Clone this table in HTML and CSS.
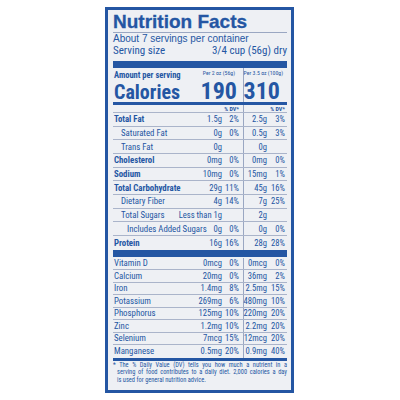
FILE: index.html
```html
<!DOCTYPE html>
<html lang="en">
<head>
    <meta charset="UTF-8">
    <meta name="viewport" content="width=device-width, initial-scale=1.0">
    <title>Nutrition Facts</title>
    <link rel="stylesheet" href="styles.css">
</head>
<body>
    <div class="label">
        <h1 class="title">Nutrition Facts</h1>
        <div class="servings">About 7 servings per container</div>
        <div class="serving-size">
            <span>Serving size</span>
            <span>3/4 cup (56g) dry</span>
        </div>
        <div class="bar bar-thick"></div>

        <div class="row row-amount">
            <span class="name">Amount per serving</span>
            <span class="c1 per">Per 2 oz (56g)</span>
            <span class="c2 per">Per 3.5 oz (100g)</span>
        </div>
        <div class="row row-calories">
            <span class="name">Calories</span>
            <span class="c1 cal">190</span>
            <span class="c2 cal">310</span>
        </div>
        <div class="bar bar-medium"></div>
        <div class="row row-dv">
            <span class="name"></span>
            <span class="amt1"></span>
            <span class="dv1">% DV*</span>
            <span class="amt2"></span>
            <span class="dv2">% DV*</span>
        </div>

        <div class="row nut">
            <span class="name bold">Total Fat</span>
            <span class="amt1">1.5g</span><span class="dv1">2%</span>
            <span class="amt2">2.5g</span><span class="dv2">3%</span>
        </div>
        <div class="row nut">
            <span class="name sub">Saturated Fat</span>
            <span class="amt1">0g</span><span class="dv1">0%</span>
            <span class="amt2">0.5g</span><span class="dv2">3%</span>
        </div>
        <div class="row nut">
            <span class="name sub">Trans Fat</span>
            <span class="amt1">0g</span><span class="dv1"></span>
            <span class="amt2">0g</span><span class="dv2"></span>
        </div>
        <div class="row nut">
            <span class="name bold">Cholesterol</span>
            <span class="amt1">0mg</span><span class="dv1">0%</span>
            <span class="amt2">0mg</span><span class="dv2">0%</span>
        </div>
        <div class="row nut">
            <span class="name bold">Sodium</span>
            <span class="amt1">10mg</span><span class="dv1">0%</span>
            <span class="amt2">15mg</span><span class="dv2">1%</span>
        </div>
        <div class="row nut">
            <span class="name bold">Total Carbohydrate</span>
            <span class="amt1">29g</span><span class="dv1">11%</span>
            <span class="amt2">45g</span><span class="dv2">16%</span>
        </div>
        <div class="row nut">
            <span class="name sub">Dietary Fiber</span>
            <span class="amt1">4g</span><span class="dv1">14%</span>
            <span class="amt2">7g</span><span class="dv2">25%</span>
        </div>
        <div class="row nut">
            <span class="name sub">Total Sugars</span>
            <span class="amt1">Less than 1g</span><span class="dv1"></span>
            <span class="amt2">2g</span><span class="dv2"></span>
        </div>
        <div class="row nut">
            <span class="name sub2">Includes Added Sugars</span>
            <span class="amt1">0g</span><span class="dv1">0%</span>
            <span class="amt2">0g</span><span class="dv2">0%</span>
        </div>
        <div class="row nut last">
            <span class="name bold">Protein</span>
            <span class="amt1">16g</span><span class="dv1">16%</span>
            <span class="amt2">28g</span><span class="dv2">28%</span>
        </div>

        <div class="bar bar-thick"></div>

        <div class="vitamins">
            <div class="row vit">
                <span class="name">Vitamin D</span>
                <span class="amt1">0mcg</span><span class="dv1">0%</span>
                <span class="amt2">0mcg</span><span class="dv2">0%</span>
            </div>
            <div class="row vit">
                <span class="name">Calcium</span>
                <span class="amt1">20mg</span><span class="dv1">0%</span>
                <span class="amt2">36mg</span><span class="dv2">2%</span>
            </div>
            <div class="row vit">
                <span class="name">Iron</span>
                <span class="amt1">1.4mg</span><span class="dv1">8%</span>
                <span class="amt2">2.5mg</span><span class="dv2">15%</span>
            </div>
            <div class="row vit">
                <span class="name">Potassium</span>
                <span class="amt1">269mg</span><span class="dv1">6%</span>
                <span class="amt2">480mg</span><span class="dv2">10%</span>
            </div>
            <div class="row vit">
                <span class="name">Phosphorus</span>
                <span class="amt1">125mg</span><span class="dv1">10%</span>
                <span class="amt2">220mg</span><span class="dv2">20%</span>
            </div>
            <div class="row vit">
                <span class="name">Zinc</span>
                <span class="amt1">1.2mg</span><span class="dv1">10%</span>
                <span class="amt2">2.2mg</span><span class="dv2">20%</span>
            </div>
            <div class="row vit">
                <span class="name">Selenium</span>
                <span class="amt1">7mcg</span><span class="dv1">15%</span>
                <span class="amt2">12mcg</span><span class="dv2">20%</span>
            </div>
            <div class="row vit last">
                <span class="name">Manganese</span>
                <span class="amt1">0.5mg</span><span class="dv1">20%</span>
                <span class="amt2">0.9mg</span><span class="dv2">40%</span>
            </div>
        </div>

        <div class="bar bar-medium"></div>

        <div class="footnote">
            <span class="line first">* The % Daily Value (DV) tells you how much a nutrient in a</span>
            <span class="line">serving of food contributes to a daily diet. 2,000 calories a day</span>
            <span class="line last-line">is used for general nutrition advice.</span>
        </div>
    </div>
</body>
</html>
```

FILE: styles.css
```css
body {
    margin: 0;
    background-color: #ffffff;
    font-family: Roboto, "Liberation Sans", Arial, sans-serif;
    font-stretch: 75%;
    color: #2456a3;
}
.label {
    box-sizing: border-box;
    width: 189px;
    height: 386px;
    margin: 7px 0 0 105px;
    padding: 2px 4px 0 5px;
    border: 3px solid #2456a3;
    background-color: #eef0f4;
}
.title {
    margin: 0;
    height: 20px;
    font-family: "Liberation Sans", Arial, sans-serif;
    font-stretch: normal;
    font-size: 19px;
    line-height: 20px;
    font-weight: bold;
    -webkit-text-stroke: 0.3px #2456a3;
    border-bottom: 1px solid #9aa7c2;
}
.servings {
    font-family: "Liberation Sans", Arial, sans-serif;
    font-stretch: normal;
    font-size: 10px;
    line-height: 12px;
}
.serving-size {
    display: flex;
    justify-content: space-between;
    font-size: 11px;
    line-height: 12px;
}
.bar {
    background-color: #2456a3;
}
.bar-thick {
    height: 7px;
    margin-top: 4px;
}
.row + .bar-thick {
    margin-top: 0;
}
.bar-medium {
    height: 3px;
}

/* table rows */
.row {
    display: grid;
    grid-template-columns: minmax(0, 1fr) 40px 21px 24px 20px;
    white-space: nowrap;
    font-size: 8.6px;
    line-height: 10px;
}
.row > span {
    display: flex;
    align-items: center;
}
.name {
    padding-left: 1px;
    font-size: 8.8px;
}
.bold {
    font-weight: bold;
    font-size: 8.8px;
}
.sub {
    padding-left: 8px;
}
.sub2 {
    padding-left: 14px;
}
.amt1, .amt2, .dv1, .dv2, .c1, .c2 {
    justify-content: flex-end;
}
.dv1 {
    padding-right: 4px;
}
.dv2 {
    padding-right: 2px;
}
.amt2, .c2 {
    border-left: 1px solid #9aa7c2;
}
.c1 {
    grid-column: 2 / 4;
}
.c2 {
    grid-column: 4 / 6;
}

.row-amount {
    height: 11px;
}
.row-amount .name {
    font-weight: bold;
    font-size: 8.5px;
    padding-top: 2px;
}
.row-amount .per {
    align-items: flex-start;
    font-size: 5.8px;
    line-height: 8px;
    padding-top: 1px;
}
.row-amount .c1 {
    padding-right: 8px;
}
.row-amount .c2 {
    padding-right: 4px;
}

.row-calories {
    height: 23px;
}
.row-calories .name {
    font-weight: bold;
    font-size: 20px;
    line-height: 20px;
    align-items: flex-end;
}
.row-calories .cal {
    font-weight: bold;
    font-size: 24px;
    line-height: 22px;
    align-items: flex-end;
}
.row-calories .c1 {
    padding-right: 6px;
}
.row-calories .c2 {
    padding-right: 7px;
}

.row-dv {
    box-sizing: border-box;
    height: 8px;
    border-bottom: 1px solid #aab4ca;
    font-weight: bold;
    font-size: 6px;
    line-height: 7px;
}

.nut {
    box-sizing: border-box;
    height: 13.67px;
    border-bottom: 1px solid #aab4ca;
}
.vitamins {
    margin-top: 1px;
}
.vit {
    box-sizing: border-box;
    height: 12.5px;
    border-bottom: 1px solid #aab4ca;
}
.row.last {
    border-bottom: none;
}

.footnote {
    padding: 1.5px 0 0 4px;
    font-size: 6.4px;
    line-height: 7.4px;
}
.footnote .line {
    display: block;
    text-align: justify;
    text-align-last: justify;
}
.footnote .first {
    text-indent: -4px;
}
.footnote .last-line {
    text-align-last: left;
}
```
